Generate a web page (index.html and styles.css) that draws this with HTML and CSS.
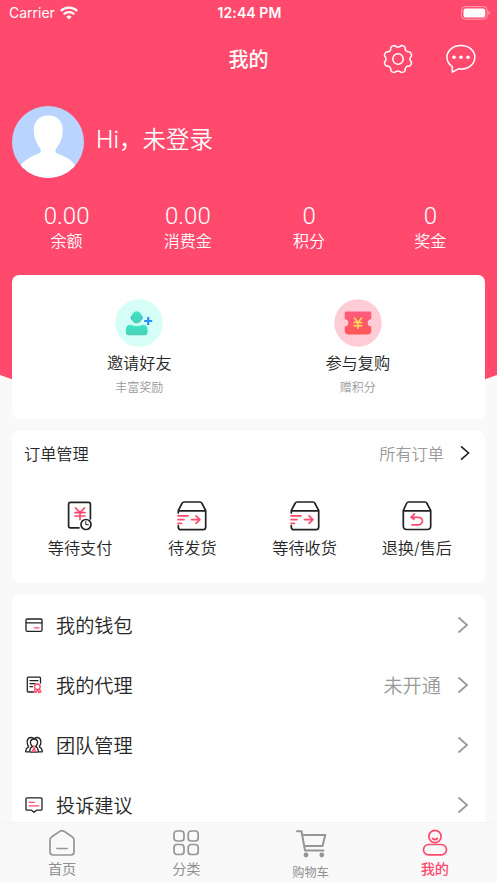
FILE: index.html
```html
<!DOCTYPE html>
<html lang="zh-CN">
<head>
<meta charset="utf-8">
<title>我的</title>
<link rel="stylesheet" href="styles.css">
</head>
<body>
<svg class="defs" width="0" height="0">
  <defs>
    <symbol id="chevron" viewBox="0 0 12 18"><path d="M1.500 1.500 10 9l-8.500 7.500"/></symbol>
    <symbol id="parcel" viewBox="0 0 30 30"><path class="ink" d="M1.300 12V9.500L5 2.500Q5.600 1 7.200 1h15.600q1.600 0 2.200 1.500l3.700 7V26q0 2.700-2.700 2.700H4Q1.300 28.700 1.300 26v-1.500M1.300 9.800h27.400"/><path class="accent" d="M1 14.800h10M1 18.600h6M1 22.400h3.500M14.500 18.600h8M19 14.800l3.900 3.800-3.900 3.800"/></symbol>
  </defs>
</svg>
<div class="screen">
  <div class="status">
    <div class="carrier">Carrier
      <svg width="18" height="14" viewBox="0 0 18 14" fill="none" stroke="#fff" stroke-width="2.300"><path d="M.8 5a11.700 11.700 0 0 1 16.400 0M3.700 8.200a7.600 7.600 0 0 1 10.600 0"/><path d="M6.300 10.800a3.900 3.900 0 0 1 5.400 0L9 13.600z" fill="#fff" stroke="none"/></svg>
    </div>
    <div class="clock">12:44 PM</div>
    <svg class="battery" width="29" height="14" viewBox="0 0 29 14"><rect x=".6" y=".6" width="25.500" height="12.600" rx="3.600" fill="none" stroke="#fff" stroke-opacity=".45"/><rect x="2.500" y="2.400" width="21.700" height="9" rx="2" fill="#fff"/><path d="M27.500 4.700q1.400.6 1.400 2.200t-1.400 2.200z" fill="#fff" fill-opacity=".5"/></svg>
  </div>

  <header class="navbar">
    <h1>我的</h1>
    <div class="tools">
      <svg width="30" height="30" viewBox="-15 -15 30 30" fill="none" stroke="#fff" stroke-width="1.500" stroke-linejoin="round"><circle r="5.200"/><path d="M-3.300-13.600Q0-10.200 3.300-13.600Q6.400-13.300 7.100-11.700Q6.700-7 11.700-7.100Q13.300-6.400 13.600-3.300Q10.200 0 13.600 3.300Q13.300 6.400 11.700 7.100Q7 6.700 7.100 11.700Q6.400 13.300 3.300 13.600Q0 10.200-3.300 13.600Q-6.400 13.300-7.100 11.700Q-6.700 7-11.700 7.100Q-13.300 6.400-13.600 3.300Q-10.200 0-13.600-3.300Q-13.300-6.400-11.700-7.100Q-7-6.700-7.100-11.700Q-6.400-13.300-3.300-13.600Z"/></svg>
      <svg width="30" height="30" viewBox="0 0 30 30" fill="none" stroke="#fff" stroke-width="1.500" stroke-linejoin="round"><path d="M6.300 28.200V22.600C3 20.400 1 17 1 13.200 1 6.500 7 1.600 15 1.600s13.800 5 13.800 11.600S23 25 15 25c-1 0-1.600 0-2.500-.2z"/><g fill="#fff" stroke="none"><circle cx="8" cy="13.200" r="1.800"/><circle cx="15" cy="13.200" r="1.800"/><circle cx="22" cy="13.200" r="1.800"/></g></svg>
    </div>
  </header>

  <section class="profile">
    <svg class="avatar" viewBox="0 0 72 72"><path fill="#b9d4ff" d="M0 0h72v72H0z"/><path fill="#fff" d="M36.300 9.500c9 0 14.500 6 14.500 14.500 0 7-2.600 13.500-6.300 18-1.800 2.600-1.500 4.500 1.500 5.700 7 2.500 14 6.300 17.500 12L64 72H8V60c4-5.500 10.500-9.500 18-12.300 3-1.200 3.600-3 1.800-5.700-3.600-5-6-11-6-18 0-8.500 5.500-14.500 14.500-14.500z"/></svg>
    <div class="greeting">Hi，<span>未登录</span></div>
  </section>

  <section class="stats">
    <div><b>0.00</b><span>余额</span></div>
    <div><b>0.00</b><span>消费金</span></div>
    <div><b>0</b><span>积分</span></div>
    <div><b>0</b><span>奖金</span></div>
  </section>

  <section class="card promos">
    <div class="promo">
      <svg width="48" height="48" viewBox="0 0 48 48"><defs><linearGradient id="mint" x2="0" y2="1"><stop stop-color="#3fe8c6"/><stop offset="1" stop-color="#4bcdb5"/></linearGradient></defs><circle cx="24" cy="24" r="23.700" fill="#d5fff6"/><rect x="15.700" y="16.500" width="12" height="4.600" rx="2" fill="#2b91ff"/><ellipse cx="21.700" cy="18.400" rx="5.200" ry="6.200" fill="url(#mint)"/><path d="M15.500 25.800q6.200 2.600 12.400 0 4.600 0 4.600 5v3q0 2.400-2.400 2.400H13.300q-2.400 0-2.400-2.400v-3q0-5 4.600-5z" fill="url(#mint)"/><path d="M33.200 18v8M29.200 22h8" stroke="#2b91ff" stroke-width="2.200"/></svg>
      <strong>邀请好友</strong><span>丰富奖励</span>
    </div>
    <div class="promo">
      <svg width="48" height="48" viewBox="0 0 48 48"><defs><linearGradient id="coral" x2="0" y2="1"><stop stop-color="#ff5a7e"/><stop offset="1" stop-color="#ff5756"/></linearGradient></defs><circle cx="24" cy="24" r="23.700" fill="#ffccd5"/><path d="M12 12.500h24q1.300 0 1.300 1.300v6.400a3.600 3.600 0 0 0 0 7.200v4.200q0 4-4 4H14.700q-4 0-4-4v-4.200a3.600 3.600 0 0 0 0-7.200v-6.400q0-1.300 1.300-1.300z" fill="url(#coral)"/><path d="M20 18.500l4 5 4-5M24 23.500V30M19.600 23.500h8.800M19.600 26.700h8.800" fill="none" stroke="#ffd95c" stroke-width="1.500"/></svg>
      <strong>参与复购</strong><span>赠积分</span>
    </div>
  </section>

  <section class="card orders">
    <div class="orders-head"><h2>订单管理</h2><span>所有订单</span><svg class="chevron dark"><use href="#chevron"/></svg></div>
    <div class="order-grid">
      <div><svg viewBox="0 0 30 30"><path class="ink" d="M14 26.800H5.500Q3.600 26.800 3.600 25V3.200Q3.600 1.300 5.500 1.300h18q1.900 0 1.900 1.900V18"/><path class="accent" d="M10.500 6.800l4.500 4.800 4.500-4.800M15 11.600v7M10 11.600h10M10 15h10"/><circle class="ink" cx="21" cy="23.500" r="5" fill="#fff"/><path class="ink thin" d="M20.800 20.500v3.200h2.600"/></svg><span>等待支付</span></div>
      <div><svg><use href="#parcel"/></svg><span>待发货</span></div>
      <div><svg><use href="#parcel"/></svg><span>等待收货</span></div>
      <div><svg viewBox="0 0 30 30"><path class="ink" d="M1.300 9.500L4.500 2.500Q5.200 1 6.800 1h16q1.600 0 2.200 1.500l3.700 7V25q0 3.500-3.500 3.500H4.800Q1.300 28.500 1.300 25zM1.300 9.800h27.400"/><path class="accent" d="M12.500 12.800l-3.500 3.500h7.700a3.750 3.750 0 0 1 0 7.500H10M9 16.300l3 2"/></svg><span>退换/售后</span></div>
    </div>
  </section>

  <section class="card menu">
    <div class="row"><svg class="icon" viewBox="0 0 18 18"><rect class="ink" x="1" y="3" width="16" height="12.300" rx="1.200"/><path class="ink" d="M1 6.800h16"/><path class="accent" d="M9.300 11.900h4.700"/></svg><span>我的钱包</span><svg class="chevron"><use href="#chevron"/></svg></div>
    <div class="row"><svg class="icon" viewBox="0 0 18 18"><path class="ink" d="M8.500 16H3.300Q2.300 16 2.300 15V2.200q0-1 1-1h11.200q1 0 1 1V7M5 4.700h8M5 7.700h5M5 10.700h2.500"/><circle class="accent" cx="12.400" cy="10.800" r="2.800"/><path class="accent" d="M10.300 13l-1.500 3 1.600-.3.500 1 1.500-3 1.500 3 .5-1 1.600.3-1.500-3"/></svg><span>我的代理</span><em>未开通</em><svg class="chevron"><use href="#chevron"/></svg></div>
    <div class="row"><svg class="icon" viewBox="0 0 18 18"><path class="ink" d="M5 15.800H1.300q-.8 0-.6-1 .5-3 3-4Q1.800 8 2.200 5 2.900 1.500 6 1.500q1.500 0 2.500.7M13 15.800h3.700q.8 0 .6-1-.5-3-3-4 1.900-2.800 1.500-5.800-.7-3.500-3.800-3.500-1.500 0-2.500.7M5.500 16.200q-1 0-.8-1 .3-3.600 2.800-4.500Q5 8 5.500 5.300 6.300 3 9 3t3.500 2.300Q13 8 10.500 10.700q2.500.9 2.800 4.500.2 1-.8 1z"/><path class="accent" d="M9 9.700v2.200l-1.300 2.600L9 15.700l1.300-1.200L9 11.900"/></svg><span>团队管理</span><svg class="chevron"><use href="#chevron"/></svg></div>
    <div class="row"><svg class="icon" viewBox="0 0 18 18"><path class="ink" d="M2 1.800h14q1 0 1 1v10.400q0 1-1 1h-4.500L9 16.300l-2.500-2.100H2q-1 0-1-1V2.800q0-1 1-1z"/><path class="accent" d="M4.200 6.300h5M4.200 9.800h9.600"/></svg><span>投诉建议</span><svg class="chevron"><use href="#chevron"/></svg></div>
  </section>

  <nav class="tabs">
    <div><svg viewBox="0 0 30 30"><path d="M4.800 8.700 13 3.300q2-1.400 4 0l8.200 5.400q1.800 1 1.800 3.300v12q0 3-3 3H6q-3 0-3-3V12q0-2.300 1.800-3.300zM10 20.500h10"/></svg><span>首页</span></div>
    <div><svg viewBox="0 0 30 30"><rect x="3" y="3" width="10" height="10" rx="3"/><rect x="17.200" y="3" width="10" height="10" rx="3"/><rect x="3" y="16.500" width="10" height="10" rx="3"/><rect x="17.200" y="16.500" width="10" height="10" rx="3"/></svg><span>分类</span></div>
    <div class="cart"><svg viewBox="0 0 32 30"><path d="M2 3.300h4.500L10 22.500h18.500M7.300 7h23L27.500 18H9.500"/><g class="wheels"><circle cx="11" cy="27" r="2.400"/><circle cx="26.800" cy="27" r="2.400"/></g></svg><span>购物车</span></div>
    <div class="active"><svg viewBox="0 0 30 30"><circle cx="15" cy="8.500" r="6.100"/><path d="M12.500 10.500q2.500 2 5 0"/><rect x="3.500" y="16.500" width="23" height="10.300" rx="5.150"/></svg><span>我的</span></div>
  </nav>
</div>
</body>
</html>
```
FILE: styles.css
```css
* { box-sizing: border-box; }
body { margin: 0; font-family: Inter, "Noto Sans CJK SC", sans-serif; font-weight: 350; color: #262626; }
h1, h2 { margin: 0; font-weight: 350; }
svg { display: block; flex: none; }
.defs { position: absolute; }
.screen { display: flex; flex-direction: column; width: 497px; height: 883px; overflow: hidden; background: #f9f9f9; position: relative; isolation: isolate; }
.screen::before { content: ""; position: absolute; z-index: -1; inset: 0 0 auto; height: 400px; background: #ff4a6e; clip-path: polygon(0 0, 100% 0, 100% 375px, 480px 381px, 17px 381px, 0 375px); }

.status { display: grid; grid-template-columns: 1fr auto 1fr; align-items: center; height: 26px; flex: none; padding: 0 7px 0 9px; color: #fff; font-size: 14px; line-height: 26px; }
.carrier { display: flex; align-items: center; gap: 5px; font-weight: 400; }
.clock { font-weight: 600; letter-spacing: .1px; }
.battery { justify-self: end; }

.navbar { display: grid; grid-template-columns: 1fr auto 1fr; align-items: center; height: 66px; flex: none; padding: 0 21px; color: #fff; }
.navbar h1 { grid-column: 2; font-size: 20px; font-weight: 500; line-height: 30px; padding-top: 1px; }
.tools { display: flex; justify-content: flex-end; gap: 33px; }

.profile { display: flex; align-items: center; gap: 12px; height: 72px; flex: none; margin: 14px 12px 0; color: #fff; }
.avatar { width: 72px; height: 72px; border-radius: 50%; }
.greeting { font-size: 23.500px; line-height: 36px; padding-bottom: 4px; }

.stats { display: grid; grid-template-columns: repeat(4, 1fr); height: 97px; flex: none; padding: 24px 6px 0; color: #fff; text-align: center; }
.stats b, .stats span { display: block; }
.stats b { font-family: Roboto, sans-serif; font-size: 24px; font-weight: 300; line-height: 28px; }
.stats span { font-size: 16px; line-height: 24px; margin-top: -1px; }

.card { flex: none; margin: 0 12px 12px; border-radius: 7px; background: #fff; }
.promos { display: grid; grid-template-columns: 1fr 1fr; height: 144px; padding: 24px 18px 0; }
.promo { display: flex; flex-direction: column; align-items: center; }
.promo strong { margin-top: 4px; font-size: 16.200px; font-weight: 350; line-height: 24px; }
.promo span { margin-top: 4px; font-size: 12px; line-height: 18px; color: #999; }

.orders { height: 152px; padding: 0 12px; }
.orders-head { display: flex; align-items: center; height: 43px; font-size: 16.200px; padding-right: 2px; }
.orders-head h2 { flex: 1; font-size: 16.200px; }
.orders-head span { color: #999; margin-right: 15px; }
.chevron { width: 12px; height: 18px; fill: none; stroke: #999; stroke-width: 1.800; }
.chevron.dark { width: 12px; height: 16px; stroke: #222; }
.order-grid { display: grid; grid-template-columns: repeat(4, 1fr); padding-top: 27px; }
.order-grid > div { display: flex; flex-direction: column; align-items: center; gap: 5px; font-size: 16.200px; line-height: 24px; }
.order-grid svg { width: 30px; height: 30px; }
.ink, .accent { fill: none; stroke: #222; stroke-width: 1.700; stroke-linecap: round; stroke-linejoin: round; }
.accent { stroke: #ff4a6e; }
.thin { stroke-width: 1; }
.order-grid circle.ink { fill: #fff; }

.menu { margin-bottom: 0; flex: 1 1 0; min-height: 0; overflow: hidden; border-radius: 7px 7px 0 0; padding: 0 16px 0 13px; }
.row { display: flex; align-items: center; height: 60px; font-size: 19.200px; }
.row .icon { width: 18px; height: 18px; margin-right: 13px; }
.icon .ink, .icon .accent { stroke-width: 1.300; }
.row span { flex: 1; }
.row em { font-style: normal; color: #999; margin-right: 16px; }

.tabs { display: grid; grid-template-columns: repeat(4, 1fr); flex: none; height: 61px; border-top: 1px solid #f3f3f3; background: #f9f9f9; color: #909090; font-weight: 400; }
.tabs div { display: flex; flex-direction: column; align-items: center; padding-top: 5px; font-size: 14.200px; line-height: 22px; }
.tabs svg { width: 30px; height: 30px; fill: none; stroke: #969696; stroke-width: 1.700; stroke-linecap: round; stroke-linejoin: round; }
.tabs .cart { font-size: 12.200px; }
.tabs .cart svg { width: 32px; stroke-width: 2; }
.tabs .cart span { margin-top: 4px; }
.tabs .wheels { fill: #969696; stroke: none; }
.tabs .active { color: #ff4a6e; font-weight: 500; }
.tabs .active svg { stroke: #ff4a6e; }
```
